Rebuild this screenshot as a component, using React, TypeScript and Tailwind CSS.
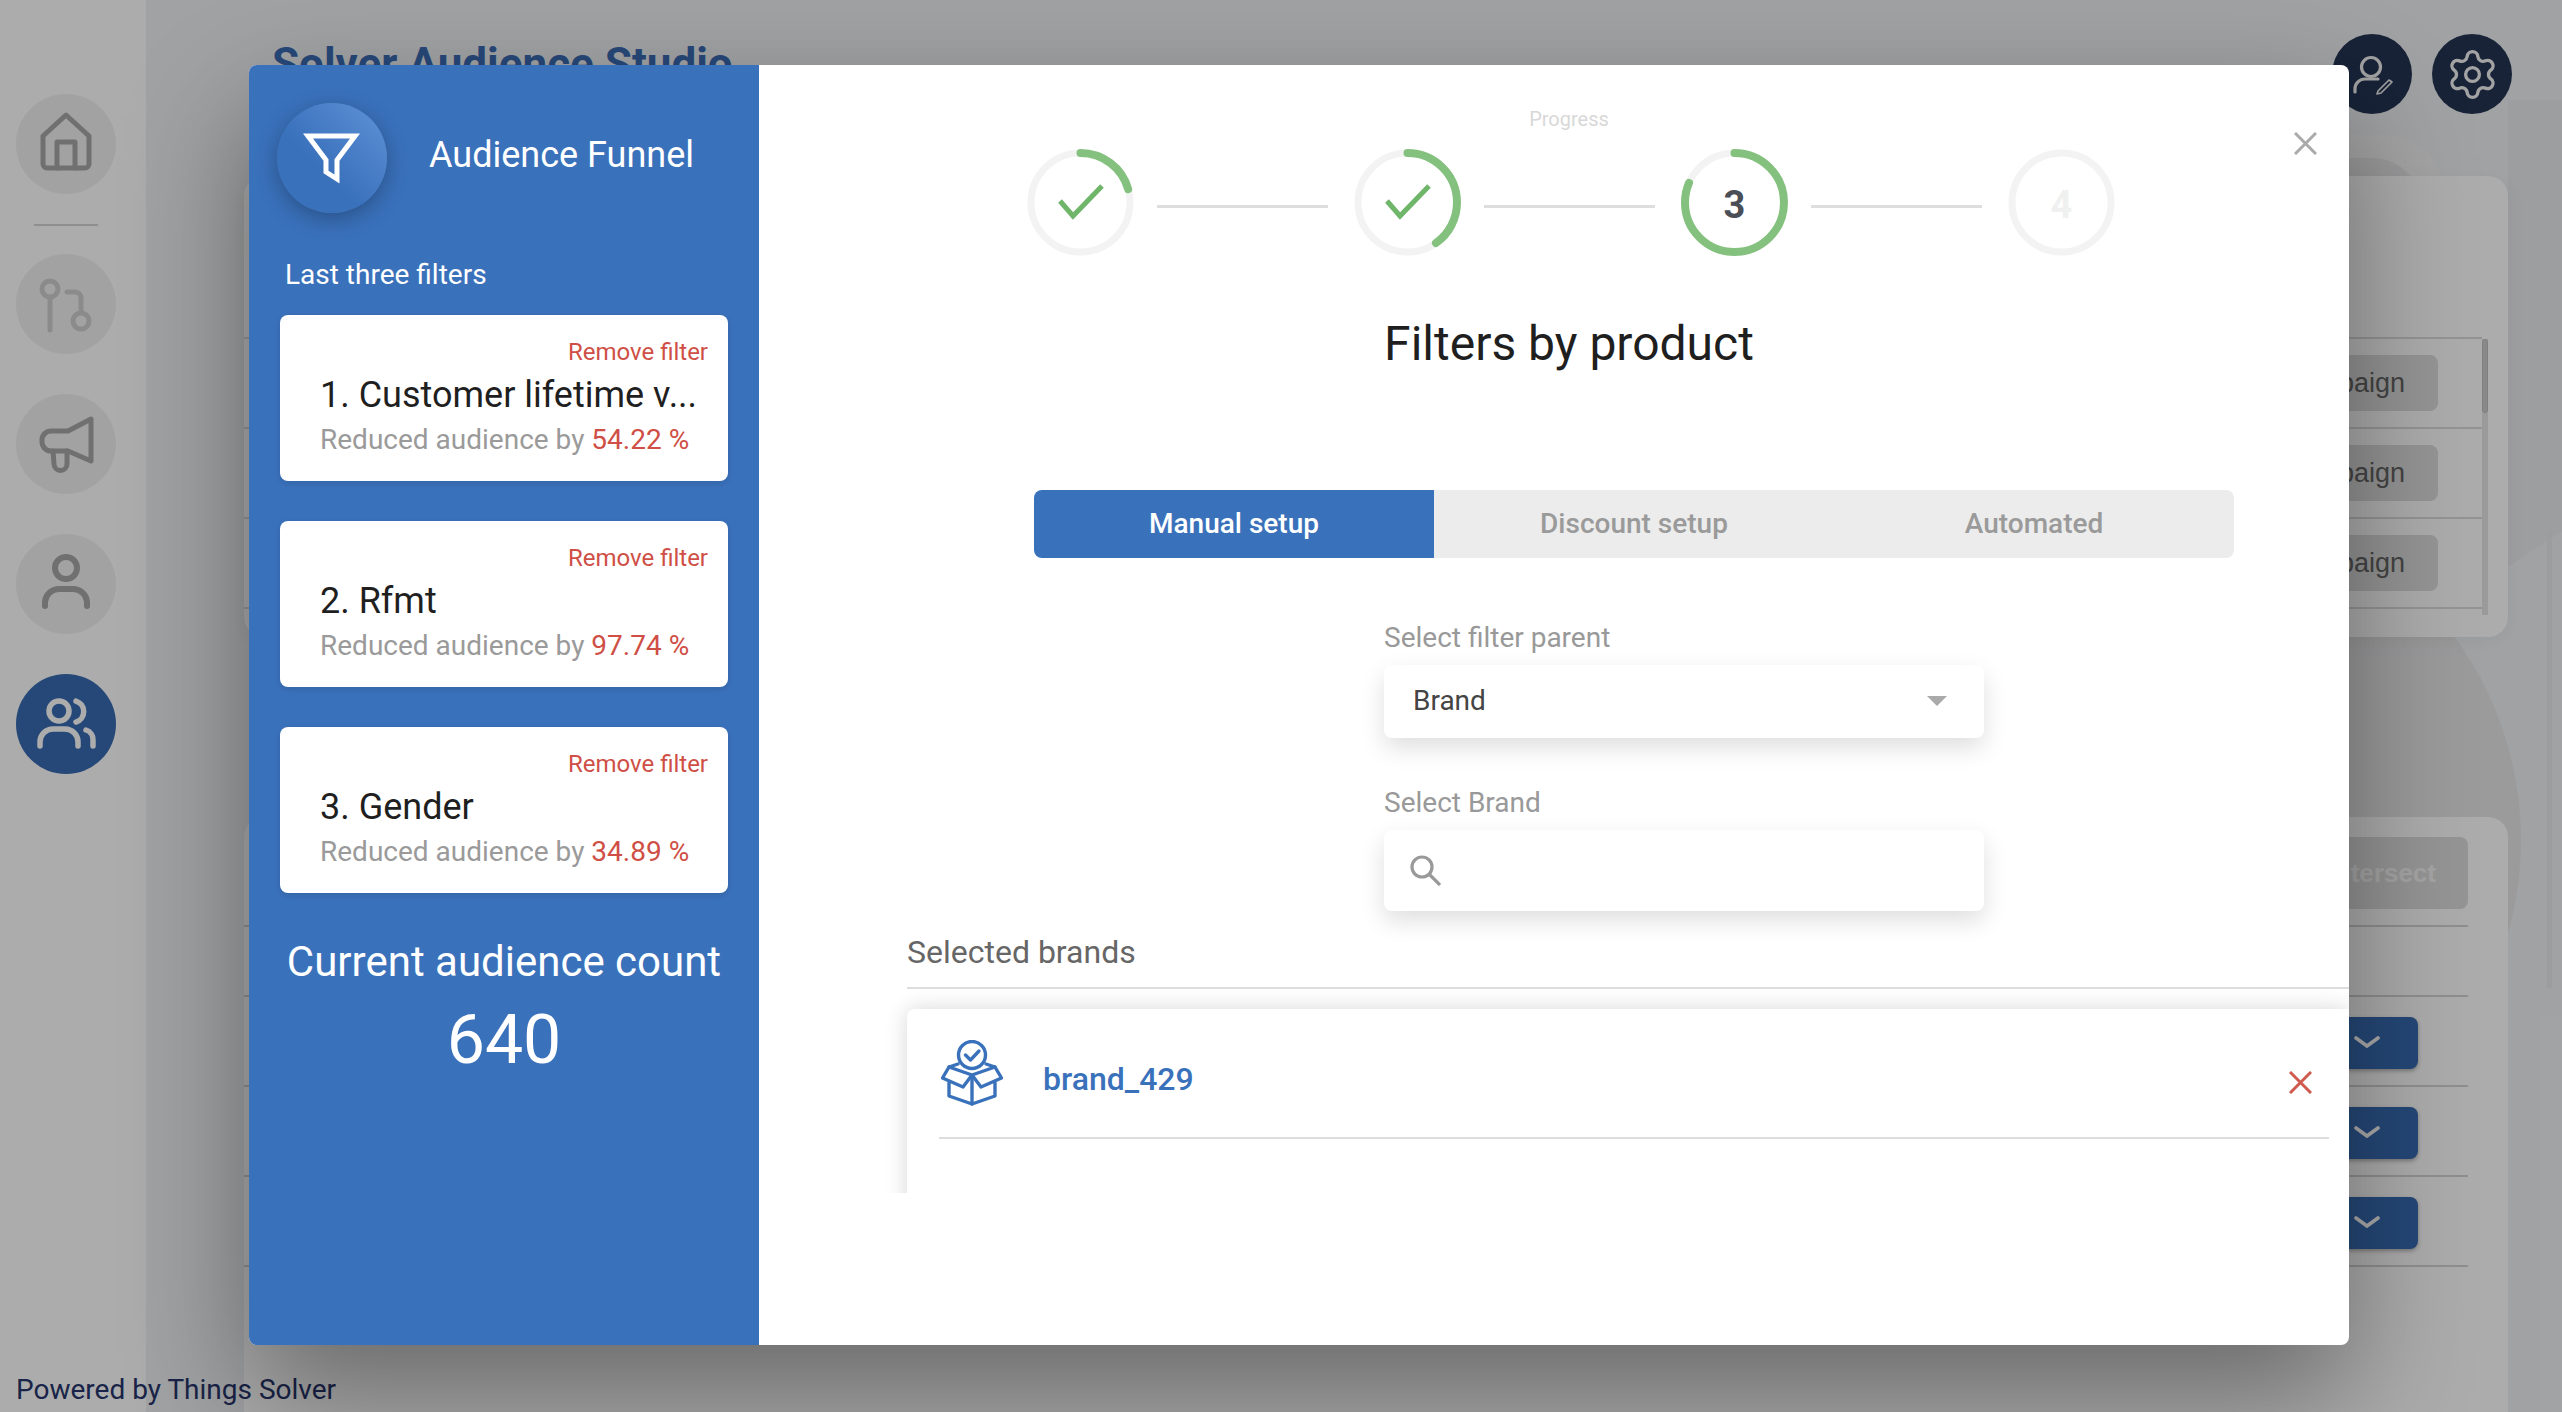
import { Settings } from "lucide-react";

const F = { fontFamily: "Roboto, sans-serif" };

function NavCircle({ active, children }: { active?: boolean; children: React.ReactNode }) {
  return (
    <div className={`h-[100px] w-[100px] rounded-full ${active ? "bg-[#386bb2]" : "bg-[#f1f1f1]"}`}>
      <svg viewBox="0 0 100 100" className="h-full w-full" fill="none" strokeLinecap="round" strokeLinejoin="round">
        {children}
      </svg>
    </div>
  );
}

function FilterCard({ title, value }: { title: string; value: string }) {
  return (
    <div className="w-[448px] h-[166px] rounded-lg bg-white pt-[23px] pl-[40px] pr-[20px] shadow-[0_2px_6px_rgba(0,0,0,0.12)]">
      <div className="text-right text-[24px] leading-[28px] text-[#cf4f46]">Remove filter</div>
      <div className="mt-[7px] text-[36px] leading-[44px] text-[#1f1f1f] whitespace-nowrap">{title}</div>
      <div className="mt-[6px] text-[28px] leading-[34px] text-[#9a9a9a] whitespace-nowrap">
        Reduced audience by <span className="text-[#cf4f46]">{value}</span>
      </div>
    </div>
  );
}

function Step({ pct, done, n, muted }: { pct: number; done?: boolean; n?: number; muted?: boolean }) {
  return (
    <div className="relative flex h-[107px] w-[107px] shrink-0 items-center justify-center">
      <svg viewBox="0 0 107 107" className="absolute inset-0 h-full w-full -rotate-90" fill="none">
        <circle cx="53.5" cy="53.5" r="49.5" stroke="#f3f3f3" strokeWidth="7" />
        {pct > 0 && (
          <circle
            cx="53.5"
            cy="53.5"
            r="49.5"
            stroke="#85c17e"
            strokeWidth="8"
            strokeLinecap="round"
            strokeDasharray={`${pct} 400`}
          />
        )}
      </svg>
      {done ? (
        <svg viewBox="0 0 107 107" className="absolute inset-0 h-full w-full" fill="none">
          <path d="M33 52 L46 67 L75 37" stroke="#6fb56a" strokeWidth="5" strokeLinejoin="miter" />
        </svg>
      ) : (
        <span className={`mt-[6px] text-[38px] font-bold ${muted ? "text-[#f0f0f0]" : "text-[#4a4e56]"}`}>{n}</span>
      )}
    </div>
  );
}

function Line() {
  return <div className="ml-[23px] mr-[26px] mt-[8px] h-[3px] w-[171px] shrink-0 bg-[#dedede]" />;
}

function BrandIcon() {
  return (
    <svg viewBox="0 0 62 66" className="-mt-[12px] h-[66px] w-[62px] shrink-0" fill="none" stroke="#3a71bb" strokeWidth="3.4" strokeLinejoin="round" strokeLinecap="round">
      <circle cx="31" cy="15" r="13.5" />
      <path d="M24.5 15 L29.5 20 L38 11" />
      <path d="M17 24 L8 27 L1.5 38 L22 47 L31 35 L40 47 L60.5 38 L54 27 L45 24" />
      <path d="M8 27 L31 35 L54 27" />
      <path d="M8 43 V56 L31 64 L54 56 V43" />
      <path d="M31 37 V64" />
    </svg>
  );
}

function CampaignRow() {
  return (
    <div className="flex h-[90px] items-center justify-end border-b-2 border-[#dcdcdc] pr-[44px]">
      <div className="flex h-[56px] w-[260px] items-center justify-end rounded-lg bg-[#dddddd] pr-[33px] text-[27px] text-[#656565]" style={{ fontFamily: "'Liberation Sans', sans-serif" }}>
        Start campaign
      </div>
    </div>
  );
}

function ActionRow() {
  return (
    <div className="flex h-[90px] justify-end border-b-2 border-[#d4d4d4] pr-[50px] pt-[20px]">
      <div className="flex h-[52px] w-[200px] items-center justify-end rounded-lg bg-[#386bb2] pr-[38px] shadow-[0_2px_4px_rgba(0,0,0,0.3)]">
        <svg width="26" height="14" viewBox="0 0 26 14" fill="none">
          <path d="M2 2 L13 10 L24 2" stroke="#ffffff" strokeWidth="3.6" strokeLinecap="round" />
        </svg>
      </div>
    </div>
  );
}

export default function App() {
  return (
    <div className="relative flex h-[1412px] w-[2562px] overflow-hidden bg-[#eff1f3]" style={F}>
      {/* faint background shapes */}
      <svg className="absolute inset-0 h-full w-full" viewBox="0 0 2562 1412" fill="none">
        <circle cx="2177" cy="840" r="344" fill="#e6e6e8" />
        <polygon points="2508,100 2562,100 2562,531 2508,567" fill="#e9eaec" />
        <rect x="2000" y="135" width="444" height="200" rx="60" fill="#f3f3f4" />
        <rect x="2000" y="158" width="422" height="200" rx="50" fill="#e6e6e8" />
        <rect x="2547" y="531" width="5" height="457" fill="#e8e9eb" />
      </svg>

      <aside className="relative z-10 flex h-full w-[146px] shrink-0 flex-col items-center bg-white pl-[16px] pr-[30px] pt-[94px]">
        <NavCircle>
          <g stroke="#a6a6a6" strokeWidth="5">
            <path d="M27 42 L50 21 L73 42 V70 a4 4 0 0 1 -4 4 H31 a4 4 0 0 1 -4 -4 Z" />
            <path d="M41 74 V48 H59 V74" />
          </g>
        </NavCircle>
        <div className="mt-[30px] h-[2px] w-[64px] shrink-0 bg-[#d4d4d4]" />
        <div className="mt-[28px] flex flex-col gap-[40px]">
          <NavCircle>
            <g stroke="#cfcfcf" strokeWidth="5">
              <circle cx="34" cy="35" r="8" />
              <path d="M34 43 V76" />
              <circle cx="65" cy="67" r="8" />
              <path d="M51 38 H59 a6 6 0 0 1 6 6 V59" />
            </g>
          </NavCircle>
          <NavCircle>
            <g stroke="#a6a6a6" strokeWidth="5">
              <path d="M75 25 L52 37 H35 a9 9 0 0 0 -9 9 v2 a9 9 0 0 0 9 9 H52 L75 67 Z" />
              <path d="M37 57 L38 70 a6.5 6.5 0 0 0 13 0 V57" />
            </g>
          </NavCircle>
          <NavCircle>
            <g stroke="#a6a6a6" strokeWidth="6">
              <circle cx="50" cy="34" r="11" />
              <path d="M29 72 V68 a14 14 0 0 1 14 -13 H57 a14 14 0 0 1 14 13 V72" />
            </g>
          </NavCircle>
          <NavCircle active>
            <g stroke="#ffffff" strokeWidth="5.5">
              <circle cx="43" cy="37" r="10" />
              <path d="M60 27 a11 11 0 0 1 0 21" />
              <path d="M24 72 V68 a13 13 0 0 1 13 -13 H49 a13 13 0 0 1 13 13 V72" />
              <path d="M70 56 a10 10 0 0 1 7 10 V72" />
            </g>
          </NavCircle>
        </div>
        <div className="mb-[6px] mt-auto w-[146px] self-start whitespace-nowrap text-[28px] leading-[32px] text-[#27356b]">
          Powered by Things Solver
        </div>
      </aside>

      <main className="relative flex h-full flex-1 flex-col pl-[98px] pr-[50px] pt-[34px]">
        <header className="flex h-[80px] shrink-0 items-start justify-between pl-[28px]">
          <h1 className="mt-[5px] text-[44px] font-bold leading-[50px] text-[#3a6cb4]">Solver Audience Studio</h1>
          <div className="flex gap-[20px]">
            <div className="h-[80px] w-[80px] rounded-full bg-[#243554]">
              <svg viewBox="0 0 80 80" className="h-full w-full" fill="none" stroke="#f2f2f2" strokeLinecap="round" strokeLinejoin="round">
                <circle cx="39" cy="33" r="9.5" strokeWidth="3.2" />
                <path d="M23 58 V55 a10 10 0 0 1 10 -10 H46" strokeWidth="3.2" />
                <path d="M46 57 L57 46 L60 48 L49 59 L45 60 Z" strokeWidth="1.6" />
              </svg>
            </div>
            <div className="flex h-[80px] w-[80px] items-center justify-center rounded-full bg-[#243554]">
              <Settings size={55} strokeWidth={1.45} color="#f2f2f2" />
            </div>
          </div>
        </header>

        <section className="mr-[4px] mt-[62px] h-[461px] shrink-0 rounded-[20px] bg-white pr-[26px] pt-[161px] shadow-[0_4px_20px_rgba(0,0,0,0.05)]">
          <div className="relative border-t-2 border-[#dcdcdc]">
            <CampaignRow />
            <CampaignRow />
            <CampaignRow />
            <div className="absolute bottom-[-6px] right-[-6px] top-0 w-[6px] bg-[#e4e4e4]">
              <div className="h-[74px] w-full rounded-[3px] border border-[#bdbdbd] bg-[#cccccc]" />
            </div>
          </div>
        </section>

        <section className="mr-[4px] mt-[180px] flex-1 rounded-t-[20px] bg-white pr-[40px] pt-[20px]">
          <div className="flex justify-end">
            <div className="flex h-[72px] w-[300px] items-center justify-end rounded-lg bg-[#dddddd] pr-[32px] text-[26px] font-bold text-[#f5f5f5]" style={{ fontFamily: "'Liberation Sans', sans-serif" }}>
              Intersect
            </div>
          </div>
          <div className="mt-[16px] h-[72px] border-y-2 border-[#d4d4d4]" />
          <ActionRow />
          <ActionRow />
          <ActionRow />
        </section>
      </main>

      {/* modal layer */}
      <div className="absolute inset-0 z-20 bg-black/[0.325] pl-[249px] pt-[65px]">
        <div className="flex h-[1280px] w-[2100px] rounded-lg bg-white shadow-[0_50px_120px_rgba(0,0,0,0.39)]">
          <div className="h-full w-[510px] shrink-0 rounded-l-lg bg-[#3a71bb] pt-[38px] text-white">
            <div className="flex items-center pl-[28px]">
              <div className="h-[110px] w-[110px] rounded-full bg-gradient-to-tr from-[#3a71bb] from-40% to-[#5f93d8] shadow-[0_6px_22px_rgba(0,0,0,0.28)]">
                <svg viewBox="0 0 110 110" className="h-full w-full" fill="none" stroke="#ffffff" strokeWidth="5" strokeLinejoin="miter">
                  <path d="M31 33 H78 L60 57 V76 L49 69 V57 Z" />
                </svg>
              </div>
              <div className="mb-[6px] ml-[42px] text-[36px] leading-[44px]">Audience Funnel</div>
            </div>
            <div className="ml-[36px] mt-[46px] text-[28px] leading-[32px]">Last three filters</div>
            <div className="ml-[31px] mt-[24px] flex flex-col gap-[40px]">
              <FilterCard title="1. Customer lifetime v..." value="54.22 %" />
              <FilterCard title="2. Rfmt" value="97.74 %" />
              <FilterCard title="3. Gender" value="34.89 %" />
            </div>
            <div className="mt-[44px] text-center text-[42px] leading-[50px]">Current audience count</div>
            <div className="mt-[15px] text-center text-[68px] leading-[76px]">640</div>
          </div>

          <div className="relative min-w-0 flex-1 pt-[42px]">
            <svg className="absolute right-[32px] top-[67px] h-[23px] w-[23px]" viewBox="0 0 23 23" fill="none" stroke="#aaaaaa" strokeWidth="3">
              <path d="M1 1 L22 22 M22 1 L1 22" />
            </svg>
            <div className="ml-[30px] text-center text-[20px] leading-[24px] text-[#d8d8d8]">Progress</div>
            <div className="ml-[268px] mt-[18px] flex items-center">
              <Step pct={64} done />
              <Line />
              <Step pct={125} done />
              <Line />
              <Step pct={253} n={3} />
              <Line />
              <Step pct={0} n={4} muted />
            </div>
            <div className="ml-[30px] mt-[58px] text-center text-[48px] leading-[60px] text-[#1f1f1f]">Filters by product</div>

            <div className="ml-[275px] mt-[116px] flex h-[68px] w-[1200px] rounded-lg bg-[#ececec] text-[28px] font-medium text-[#9a9a9a]">
              <div className="flex w-[400px] items-center justify-center rounded-l-lg bg-[#3a71bb] text-white">Manual setup</div>
              <div className="flex w-[400px] items-center justify-center">Discount setup</div>
              <div className="flex w-[400px] items-center justify-center">Automated</div>
            </div>

            <div className="ml-[625px] w-[600px]">
              <div className="mt-[63px] text-[28px] leading-[34px] text-[#999999]">Select filter parent</div>
              <div className="mt-[10px] flex h-[73px] items-center justify-between rounded-lg bg-white pb-[2px] pl-[29px] pr-[37px] shadow-[0_10px_24px_rgba(0,0,0,0.13)]">
                <span className="text-[28px] text-[#444444]">Brand</span>
                <svg width="20" height="10" viewBox="0 0 20 10">
                  <polygon points="0,0 20,0 10,10" fill="#aaaaaa" />
                </svg>
              </div>
              <div className="mt-[48px] text-[28px] leading-[34px] text-[#999999]">Select Brand</div>
              <div className="mt-[10px] flex h-[81px] items-center rounded-lg bg-white pl-[26px] shadow-[0_10px_24px_rgba(0,0,0,0.13)]">
                <svg width="31" height="31" viewBox="0 0 31 31" fill="none" stroke="#999999" strokeWidth="3.2">
                  <circle cx="12" cy="12" r="10" />
                  <path d="M19 19 L30 30" />
                </svg>
              </div>
            </div>

            <div className="ml-[148px] mt-[21px] border-b-2 border-[#dddddd] pb-[15px] text-[32px] leading-[40px] text-[#666666]">Selected brands</div>
            <div className="ml-[118px] h-[204px] overflow-hidden pl-[30px] pt-[20px]">
              <div className="h-[300px] rounded-tl-lg bg-white pl-[32px] pr-[20px] shadow-[0_0_22px_rgba(0,0,0,0.16)]">
                <div className="flex h-[130px] items-center border-b-2 border-[#dddddd] pl-[2px] pr-[17px] pt-[12px]">
                  <BrandIcon />
                  <span className="ml-[40px] flex-1 text-[32px] font-medium text-[#3a71bb]">brand_429</span>
                  <svg className="mt-[6px] h-[23px] w-[23px]" viewBox="0 0 23 23" fill="none" stroke="#d05a4e" strokeWidth="3">
                    <path d="M1 1 L22 22 M22 1 L1 22" />
                  </svg>
                </div>
              </div>
            </div>
          </div>
        </div>
      </div>
    </div>
  );
}
